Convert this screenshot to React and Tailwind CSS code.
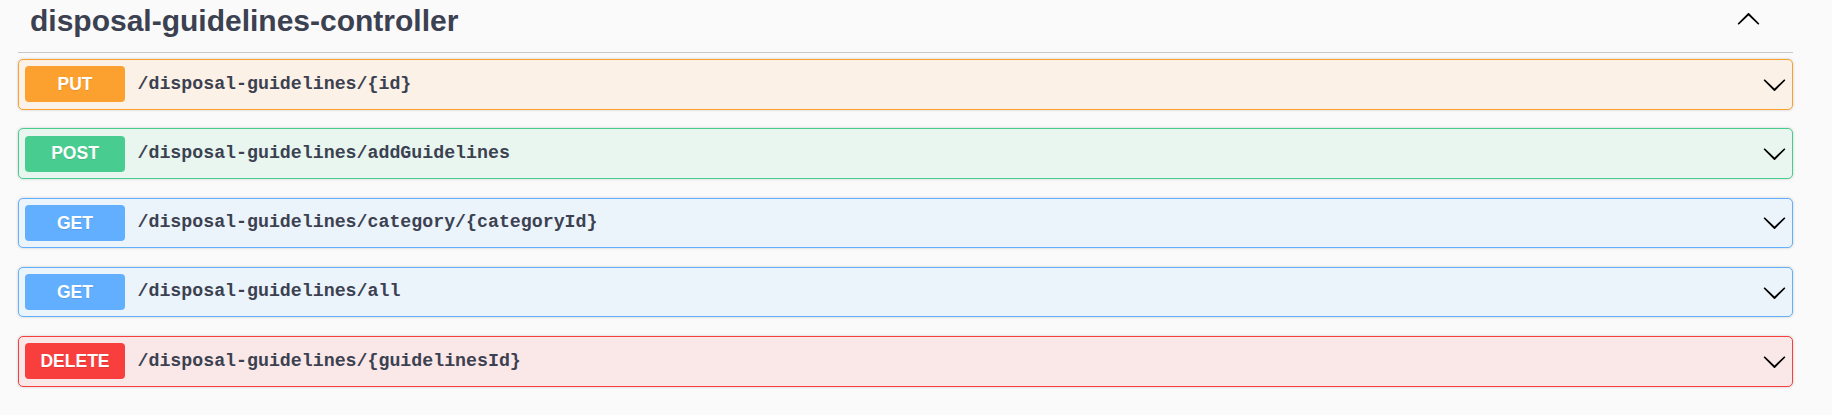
const ops = [
    { method: "PUT", path: "/disposal-guidelines/{id}", badge: "bg-[#fca130]", box: "border-[#fca130] bg-[#fbf1e6]" },
    { method: "POST", path: "/disposal-guidelines/addGuidelines", badge: "bg-[#49cc90]", box: "border-[#49cc90] bg-[#e8f6ef]" },
    { method: "GET", path: "/disposal-guidelines/category/{categoryId}", badge: "bg-[#61affe]", box: "border-[#61affe] bg-[#ebf3fb]" },
    { method: "GET", path: "/disposal-guidelines/all", badge: "bg-[#61affe]", box: "border-[#61affe] bg-[#ebf3fb]" },
    { method: "DELETE", path: "/disposal-guidelines/{guidelinesId}", badge: "bg-[#f93e3e]", box: "border-[#f93e3e] bg-[#fae7e7]" },
];

const Arrow = ({ up }) => (
    <svg width="25" height="25" viewBox="0 0 20 20" className={up ? "rotate-180" : ""}>
        <path
            fill="#000"
            d="M17.418 6.109c.272-.268.709-.268.979 0s.271.701 0 .969l-7.908 7.83c-.27.268-.707.268-.979 0l-7.908-7.83c-.27-.268-.27-.701 0-.969.271-.268.709-.268.979 0L10 13.25l7.418-7.141z"
        />
    </svg>
);

const App = () => {
    return (
        <div className="w-full h-[415px] bg-[#fafafa] pl-[18px] pr-[39px] font-['Liberation_Sans',Arial,sans-serif]">
            {/* Tag heading */}
            <div className="h-[53px] flex items-start justify-between border-b border-[#c7c8cb] pl-[12px] pr-[32px]">
                <h3 className="mt-[4px] text-[30px] leading-[34px] font-bold text-[#3b4151]">
                    disposal-guidelines-controller
                </h3>
                <div className="mt-[7px]">
                    <Arrow up />
                </div>
            </div>

            {/* Operations */}
            <div className="mt-[6px] flex flex-col gap-[18.75px]">
                {ops.map((op, i) => (
                    <div
                        key={i}
                        className={`h-[50.5px] flex items-center border rounded-[5px] pl-[6px] pr-[5px] shadow-[0_0_3px_rgba(0,0,0,0.19)] ${op.box}`}
                    >
                        <span
                            className={`w-[100px] h-[36px] flex items-center justify-center rounded-[4px] text-white text-[17.5px] font-bold [text-shadow:0_1px_0_rgba(0,0,0,0.1)] ${op.badge}`}
                        >
                            {op.method}
                        </span>
                        <span className="ml-[12.5px] flex-1 font-['Liberation_Mono',monospace] font-bold text-[18.25px] text-[#3b4151]">
                            {op.path}
                        </span>
                        <Arrow />
                    </div>
                ))}
            </div>
        </div>
    );
};

export default App;
